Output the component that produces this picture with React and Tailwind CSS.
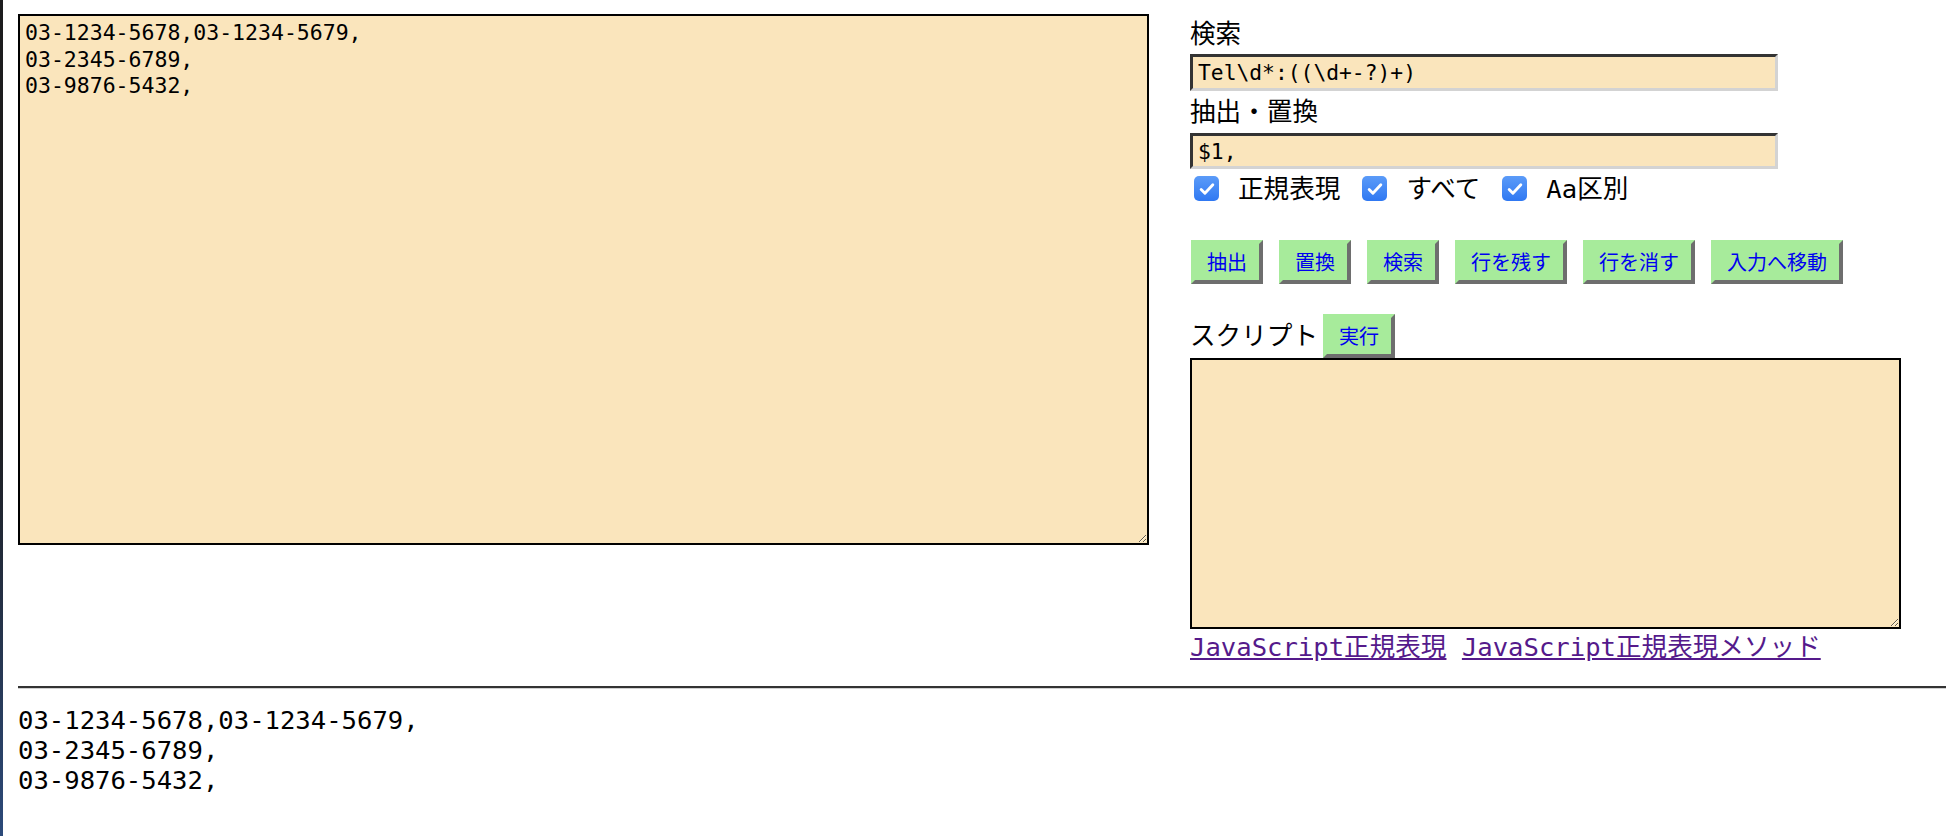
const mono = "font-['DejaVu_Sans_Mono','Noto_Sans_CJK_JP',monospace]";
const sample = "03-1234-5678,03-1234-5679,\n03-2345-6789,\n03-9876-5432,";

const buttons = ["抽出", "置換", "検索", "行を残す", "行を消す", "入力へ移動"];
const options = ["正規表現", "すべて", "Aa区別"];

function Button({ children }) {
  return (
    <button className="h-[44px] px-[12px] bg-[#a7eb9b] border-[4px] border-t-[#a7eb9b] border-l-[#a7eb9b] border-r-[#6e6e6e] border-b-[#6e6e6e] text-[20px] leading-[28px] text-[#0000f0] font-['Noto_Sans_CJK_JP',sans-serif]">
      {children}
    </button>
  );
}

function Check({ label }) {
  return (
    <label className="flex items-center mr-[22px]">
      <span className="w-[25px] h-[25px] rounded-[5px] bg-gradient-to-b from-[#5b9bf8] to-[#2f78f2] flex items-center justify-center">
        <svg viewBox="0 0 24 24" className="w-[20px] h-[20px]" fill="none" stroke="white" strokeWidth="3.4" strokeLinecap="round" strokeLinejoin="round">
          <path d="M5 12.5l4.5 4.5L19 7" />
        </svg>
      </span>
      <span className="ml-[19px]">{label}</span>
    </label>
  );
}

export default function App() {
  return (
    <div className={`flex min-h-[836px] bg-white text-black ${mono} text-[25.6px]`}>
      <div className="w-[3px] bg-gradient-to-b from-[#1c1c1e] via-[#1c1c1e] to-[#2c4a7a] shrink-0" />
      <div className="flex-1 pl-[15px] pt-[14px]">
        <div className="flex items-start gap-[41px]">
          <textarea
            defaultValue={sample}
            className={`w-[1131px] h-[531px] shrink-0 border-2 border-black bg-[#fae5bc] px-[5px] pt-[4px] text-[21.5px] leading-[26.5px] ${mono} outline-none`}
          />
          <div className="flex flex-col w-[711px]">
            <div className="h-[40px] flex items-center">検索</div>
            <input
              defaultValue="Tel\d*:((\d+-?)+)"
              className={`w-[588px] h-[37px] bg-[#fae5bc] border-[3px] border-t-[#333] border-l-[#333] border-r-[#d3d3d3] border-b-[#d3d3d3] px-[5px] text-[21.3px] ${mono} outline-none`}
            />
            <div className="h-[42px] flex items-center">抽出・置換</div>
            <input
              defaultValue="$1,"
              className={`w-[588px] h-[36px] bg-[#fae5bc] border-[3px] border-t-[#333] border-l-[#333] border-r-[#d3d3d3] border-b-[#d3d3d3] px-[5px] text-[21.3px] ${mono} outline-none`}
            />
            <div className="h-[40px] flex items-center pl-[4px]">
              {options.map((o) => (
                <Check key={o} label={o} />
              ))}
            </div>
            <div className="mt-[31px] flex gap-[16px] pl-[1px]">
              {buttons.map((b) => (
                <Button key={b}>{b}</Button>
              ))}
            </div>
            <div className="mt-[30px] flex items-center gap-[5px]">
              <span>スクリプト</span>
              <Button>実行</Button>
            </div>
            <textarea className={`w-[711px] h-[271px] border-2 border-black bg-[#fae5bc] px-[5px] pt-[4px] text-[21.5px] ${mono} outline-none`} />
            <div className="h-[36px] leading-[36px]">
              <a href="#" className="text-[#551a8b] underline">JavaScript正規表現</a>{" "}
              <a href="#" className="text-[#551a8b] underline">JavaScript正規表現メソッド</a>
            </div>
          </div>
        </div>
        <div className="mt-[21px] h-[3px] border-t-2 border-t-[#333] border-b border-b-[#d0d0d0]" />
        <div className="mt-[16px] leading-[30px] whitespace-pre">{sample}</div>
      </div>
    </div>
  );
}
